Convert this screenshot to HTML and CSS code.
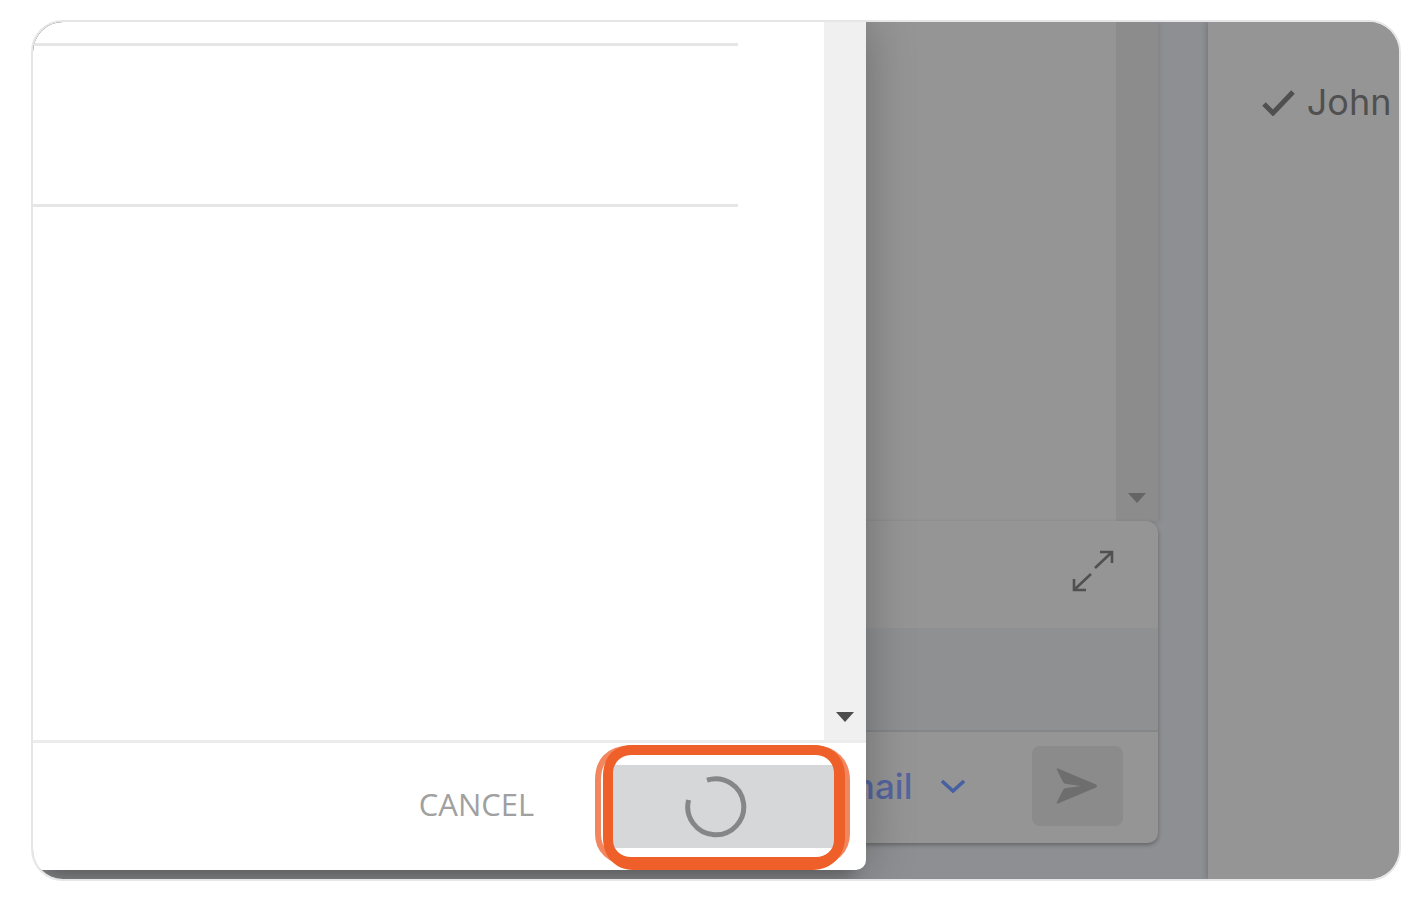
FILE: index.html
```html
<!DOCTYPE html>
<html lang="en">
<head>
    <meta charset="UTF-8">
    <meta name="viewport" content="width=device-width, initial-scale=1.0">
    <title>Send Email</title>
    <link rel="stylesheet" href="styles.css">
</head>
<body>
    <div class="frame">
        <main class="conversation">
            <section class="messages">
                <div class="scrollbar">
                    <svg width="18" height="10" viewBox="0 0 18 10"><path d="M0 0h18L9 10z" fill="#656565"/></svg>
                </div>
            </section>

            <section class="composer">
                <div class="composer-header">
                    <button class="icon-button" aria-label="Expand">
                        <svg width="42" height="42" viewBox="0 0 42 42" fill="none" stroke="#505050" stroke-width="2.6">
                            <path d="M23 18L40 2M28 2h12v11"/>
                            <path d="M19 24L2 40M2 29v11h12"/>
                        </svg>
                    </button>
                </div>
                <div class="composer-body"></div>
                <div class="composer-footer">
                    <select class="channel" aria-label="Channel">
                        <option>Email</option>
                    </select>
                    <svg class="chevron" width="24" height="14" viewBox="0 0 24 14" fill="none" stroke="#4660a2" stroke-width="3.6"><path d="M1 2l11 10L23 2"/></svg>
                    <button class="send" aria-label="Send">
                        <svg width="42" height="38" viewBox="0 0 42 38" fill="#6e6e6e"><path d="M2 1.500Q0 .5 1 3l6 12Q8 17 11 17l14 2-14 2Q8 21 7 23L1 35q-1 2.500 1 1.500L40 20.500q2-1.500 0-3z"/></svg>
                    </button>
                </div>
            </section>
        </main>

        <aside class="sidebar">
            <div class="contact">
                <svg width="33" height="28" viewBox="0 0 33 28" fill="none" stroke="#505050" stroke-width="5"><path d="M2 16l9 9L31 4"/></svg>
                <span>John</span>
            </div>
        </aside>

        <div class="modal" role="dialog" aria-label="New message">
            <div class="modal-body">
                <form class="fields">
                    <input class="field" type="text" aria-label="To">
                    <input class="field field-tall" type="text" aria-label="Subject">
                </form>
                <div class="scrollbar modal-scrollbar">
                    <svg width="18" height="10" viewBox="0 0 18 10"><path d="M0 0h18L9 10z" fill="#4c4c4c"/></svg>
                </div>
            </div>
            <div class="modal-footer">
                <button class="cancel">CANCEL</button>
                <div class="submit-wrap">
                    <button class="submit" aria-label="Sending">
                        <svg width="62" height="62" viewBox="0 0 62 62" fill="none" stroke="#858687" stroke-width="5">
                            <path d="M22 4.200A28 28 0 1 1 3.600 24"/>
                        </svg>
                    </button>
                    <!-- hand drawn highlight around the button -->
                    <svg class="highlight" width="260" height="128" viewBox="0 0 260 128" fill="none" stroke="#ee5f2a">
                        <path d="M38 4C14 5 5 18 5 36V90C5 106 15 116 38 121" stroke-width="6" opacity=".75"/>
                        <path d="M222 4C242 5 254 18 254 36V90C254 106 242 118 222 122" stroke-width="6" opacity=".75"/>
                        <path d="M40 1H220C238 1 252 12 252 32V94C252 112 238 126 220 126H40C22 126 10 112 10 94V32C10 12 22 1 40 1ZM38 11C28 11 20 19 20 29V96C20 106 28 113 38 113H223C233 113 241 106 241 96V29C241 19 233 11 223 11Z" fill="#ee5f2a" fill-rule="evenodd" stroke="none"/>
                    </svg>
                </div>
            </div>
        </div>
    </div>
</body>
</html>
```

FILE: styles.css
```css
* {
    margin: 0;
    padding: 0;
    box-sizing: border-box;
}

body {
    font-family: Inter, "Liberation Sans", sans-serif;
    background-color: #fff;
    display: flex;
    min-height: 100vh;
    padding: 20px 21px 17px 31px;
}

button, select, input {
    font-family: inherit;
    border: none;
    background: none;
}

button {
    cursor: pointer;
}

svg {
    display: block;
}

.frame {
    position: relative;
    flex: 1;
    display: flex;
    gap: 50px;
    overflow: hidden;
    background-color: #8d8f92;
    background-clip: padding-box;
    border: 2px solid #e6e6e8;
    border-radius: 32px;
}

/* Conversation behind the dialog */
.conversation {
    flex: 1;
    display: flex;
    flex-direction: column;
    padding-bottom: 36px;
}

.messages {
    flex: 1;
    display: flex;
    justify-content: flex-end;
    background-color: #959595;
    box-shadow: 0 0 6px rgba(0, 0, 0, 0.15);
}

.scrollbar {
    width: 42px;
    display: flex;
    justify-content: center;
    align-items: flex-end;
    padding-bottom: 18px;
    background-color: #8c8c8c;
}

.composer {
    position: relative;
    background-color: #959595;
    border-radius: 0 12px 10px 0;
    box-shadow: 0 2px 4px rgba(0, 0, 0, 0.3);
}

.composer-header {
    height: 107px;
    display: flex;
    justify-content: flex-end;
    align-items: center;
    padding: 0 44px 8px 0;
}

.composer-body {
    height: 102px;
    background-color: #8e9092;
}

.composer-footer {
    height: 113px;
    display: flex;
    justify-content: flex-end;
    align-items: center;
    padding: 0 35px 3px 0;
    border-top: 2px solid #858688;
}

.channel {
    appearance: none;
    font-size: 35px;
    font-weight: 500;
    color: #5565a0;
}

.chevron {
    margin: 0 67px 0 28px;
}

.send {
    width: 91px;
    height: 80px;
    display: flex;
    justify-content: center;
    align-items: center;
    background-color: #8b8b8b;
    border-radius: 8px;
}

.sidebar {
    width: 14%;
    padding: 58px 0 0 54px;
    background-color: #959595;
    box-shadow: -1px 0 6px rgba(0, 0, 0, 0.2);
}

.contact {
    display: flex;
    align-items: center;
    gap: 12px;
    font-size: 36px;
    color: #505050;
}

/* Dialog */
.modal {
    position: absolute;
    top: 0;
    left: 0;
    bottom: 9px;
    width: 61%;
    display: flex;
    flex-direction: column;
    background-color: #fff;
    border-radius: 30px 0 10px 0;
    box-shadow: 0 0 50px rgba(0, 0, 0, 0.28), 0 20px 16px -12px rgba(0, 0, 0, 0.22);
}

.modal-body {
    flex: 1;
    display: flex;
}

.fields {
    flex: 1;
    display: flex;
    flex-direction: column;
    padding-right: 86px;
}

.field {
    height: 24px;
    border-bottom: 3px solid #e6e6e7;
    font-size: 31px;
}

.field-tall {
    height: 161px;
}

.modal-scrollbar {
    background-color: #f0f0f0;
}

.modal-footer {
    height: 130px;
    display: flex;
    justify-content: flex-end;
    align-items: center;
    gap: 74px;
    padding-right: 32px;
    border-top: 3px solid #ececec;
}

.cancel {
    padding-bottom: 6px;
    font-family: "Open Sans", sans-serif;
    font-size: 31px;
    color: #a0a0a0;
}

.submit-wrap {
    position: relative;
}

.submit {
    width: 226px;
    height: 83px;
    display: flex;
    align-items: center;
    padding-left: 77px;
    background-color: #d6d7d9;
}

.highlight {
    position: absolute;
    top: -21px;
    left: -15px;
    pointer-events: none;
}
```
